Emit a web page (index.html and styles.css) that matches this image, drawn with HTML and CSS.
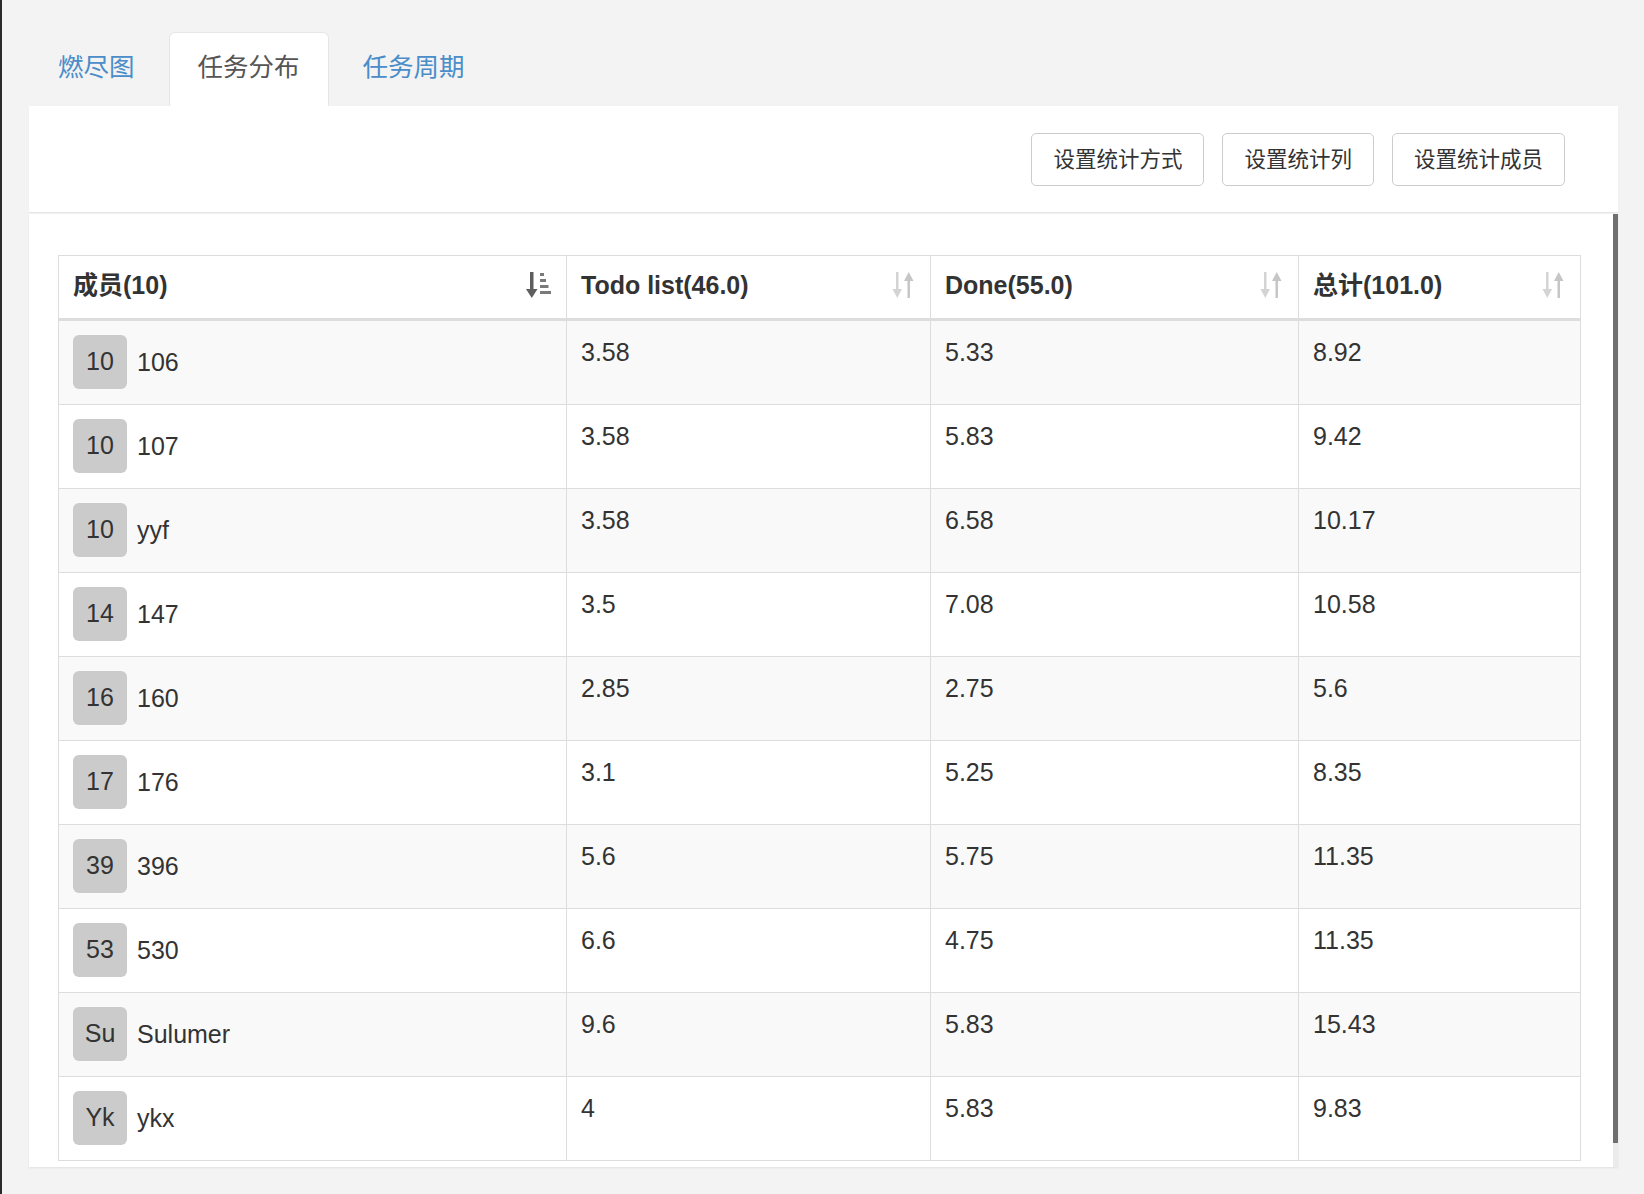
FILE: index.html
```html
<!DOCTYPE html>
<html lang="zh-CN">
<head>
<meta charset="utf-8">
<title>任务分布</title>
<link rel="stylesheet" href="styles.css">
</head>
<body>
<div class="window">
  <ul class="tabs">
    <li class="tab">燃尽图</li>
    <li class="tab active">任务分布</li>
    <li class="tab">任务周期</li>
  </ul>
  <div class="toolbar">
    <button class="btn">设置统计方式</button>
    <button class="btn">设置统计列</button>
    <button class="btn">设置统计成员</button>
  </div>
  <div class="table-panel">
    <div class="table-wrap">
      <table class="grid">
        <colgroup>
          <col class="c1"><col class="c2"><col class="c3"><col class="c4">
        </colgroup>
        <thead>
          <tr>
            <th><div class="th-inner"><span>成员(10)</span>
              <svg class="sort" viewBox="0 0 26 28" width="26" height="28"><rect x="4" y="1" width="3.5" height="19" fill="#5e5e5e"/><polygon points="0,18 11.5,18 5.75,27" fill="#5e5e5e"/><rect x="14" y="2" width="4" height="3" fill="#7a7a7a"/><rect x="14" y="8" width="6" height="3" fill="#7a7a7a"/><rect x="14" y="14" width="8.5" height="3" fill="#7a7a7a"/><rect x="14" y="20" width="11" height="3" fill="#7a7a7a"/></svg>
            </div></th>
            <th><div class="th-inner"><span>Todo list(46.0)</span>
              <svg class="sort" viewBox="0 0 26 28" width="26" height="28"><rect x="6" y="1" width="2.5" height="19" fill="#d4d4d4"/><polygon points="2.5,18 12,18 7.25,27" fill="#d4d4d4"/><polygon points="14,10 23.5,10 18.75,1" fill="#c6c6c6"/><rect x="17.5" y="8" width="2.5" height="19" fill="#c6c6c6"/></svg>
            </div></th>
            <th><div class="th-inner"><span>Done(55.0)</span>
              <svg class="sort" viewBox="0 0 26 28" width="26" height="28"><rect x="6" y="1" width="2.5" height="19" fill="#d4d4d4"/><polygon points="2.5,18 12,18 7.25,27" fill="#d4d4d4"/><polygon points="14,10 23.5,10 18.75,1" fill="#c6c6c6"/><rect x="17.5" y="8" width="2.5" height="19" fill="#c6c6c6"/></svg>
            </div></th>
            <th><div class="th-inner"><span>总计(101.0)</span>
              <svg class="sort" viewBox="0 0 26 28" width="26" height="28"><rect x="6" y="1" width="2.5" height="19" fill="#d4d4d4"/><polygon points="2.5,18 12,18 7.25,27" fill="#d4d4d4"/><polygon points="14,10 23.5,10 18.75,1" fill="#c6c6c6"/><rect x="17.5" y="8" width="2.5" height="19" fill="#c6c6c6"/></svg>
            </div></th>
          </tr>
        </thead>
        <tbody>
          <tr><td class="member"><span class="avatar">10</span><span class="name">106</span></td><td>3.58</td><td>5.33</td><td>8.92</td></tr>
          <tr><td class="member"><span class="avatar">10</span><span class="name">107</span></td><td>3.58</td><td>5.83</td><td>9.42</td></tr>
          <tr><td class="member"><span class="avatar">10</span><span class="name">yyf</span></td><td>3.58</td><td>6.58</td><td>10.17</td></tr>
          <tr><td class="member"><span class="avatar">14</span><span class="name">147</span></td><td>3.5</td><td>7.08</td><td>10.58</td></tr>
          <tr><td class="member"><span class="avatar">16</span><span class="name">160</span></td><td>2.85</td><td>2.75</td><td>5.6</td></tr>
          <tr><td class="member"><span class="avatar">17</span><span class="name">176</span></td><td>3.1</td><td>5.25</td><td>8.35</td></tr>
          <tr><td class="member"><span class="avatar">39</span><span class="name">396</span></td><td>5.6</td><td>5.75</td><td>11.35</td></tr>
          <tr><td class="member"><span class="avatar">53</span><span class="name">530</span></td><td>6.6</td><td>4.75</td><td>11.35</td></tr>
          <tr><td class="member"><span class="avatar">Su</span><span class="name">Sulumer</span></td><td>9.6</td><td>5.83</td><td>15.43</td></tr>
          <tr><td class="member"><span class="avatar">Yk</span><span class="name">ykx</span></td><td>4</td><td>5.83</td><td>9.83</td></tr>
        </tbody>
      </table>
    </div>
    <div class="scrollbar"><div class="thumb"></div></div>
  </div>
</div>
</body>
</html>
```
FILE: styles.css
```css
html, body {
  margin: 0;
  padding: 0;
}
body {
  background: #f3f3f3;
  font-family: "Liberation Sans", Arial, "Noto Sans CJK SC", sans-serif;
  color: #333;
  font-size: 25px;
}
.window {
  box-sizing: border-box;
  min-height: 1194px;
  border-left: 2px solid #2a2a2a;
  padding: 32px 26px 0 27px;
}
.tabs {
  list-style: none;
  margin: 0;
  padding: 0;
  display: flex;
  height: 74px;
}
.tab {
  box-sizing: border-box;
  height: 74px;
  display: flex;
  align-items: center;
  padding: 0 28px 10px 28px;
  margin-right: 5px;
  border: 1px solid transparent;
  border-bottom: none;
  border-radius: 6px 6px 0 0;
  font-family: "Noto Sans CJK SC", "Liberation Sans", sans-serif;
  font-size: 25.5px;
  color: #4a8dc8;
}
.tab.active {
  background: #fff;
  color: #555;
  border-color: #e6e6e6;
}
.toolbar {
  background: #fff;
  height: 106px;
  box-sizing: border-box;
  display: flex;
  justify-content: flex-end;
  align-items: center;
  gap: 18px;
  padding: 0 53px 0 0;
  box-shadow: 0 1px 1px rgba(0,0,0,0.05);
}
.btn {
  box-sizing: border-box;
  height: 53px;
  padding: 0 21px 5px 21px;
  background: #fff;
  border: 1px solid #ccc;
  border-radius: 5px;
  color: #333;
  font-family: "Noto Sans CJK SC", "Liberation Sans", sans-serif;
  font-size: 21.5px;
  margin-top: 1px;
}
.table-panel {
  margin-top: 2px;
  background: #fff;
  display: flex;
  box-shadow: 0 1px 2px rgba(0,0,0,0.08);
}
.table-wrap {
  flex: 1;
  padding: 41px 32px 6px 29px;
}
.scrollbar {
  width: 6px;
  background: #ebebeb;
  display: flex;
  flex-direction: column;
}
.thumb {
  height: 929px;
  background: #6f6f6f;
}
.grid {
  width: 1522px;
  table-layout: fixed;
  border-collapse: collapse;
}
.c1 { width: 508px; }
.c2 { width: 364px; }
.c3 { width: 368px; }
.c4 { width: 282px; }
.grid th,
.grid td {
  border: 1px solid #ddd;
  padding: 14px;
  line-height: 34px;
  text-align: left;
  vertical-align: top;
}
.grid th {
  padding: 12px 14px 16px 14px;
  border-bottom: 3px solid #ddd;
  font-weight: bold;
}
.th-inner {
  display: flex;
  justify-content: space-between;
  align-items: center;
}
.th-inner span {
  font-family: "Liberation Sans", Arial, "Noto Sans CJK SC", sans-serif;
}
.sort {
  display: block;
  margin-right: 0;
}
.grid tbody tr:nth-child(odd) {
  background: #f9f9f9;
}
.grid td {
  height: 55px;
}
.member {
  white-space: nowrap;
}
.avatar {
  display: inline-block;
  width: 54px;
  height: 54px;
  line-height: 52px;
  text-align: center;
  background: #cbcbcb;
  border-radius: 6px;
  vertical-align: middle;
  color: #333;
}
.name {
  display: inline-block;
  margin-left: 10px;
  vertical-align: middle;
}
```
